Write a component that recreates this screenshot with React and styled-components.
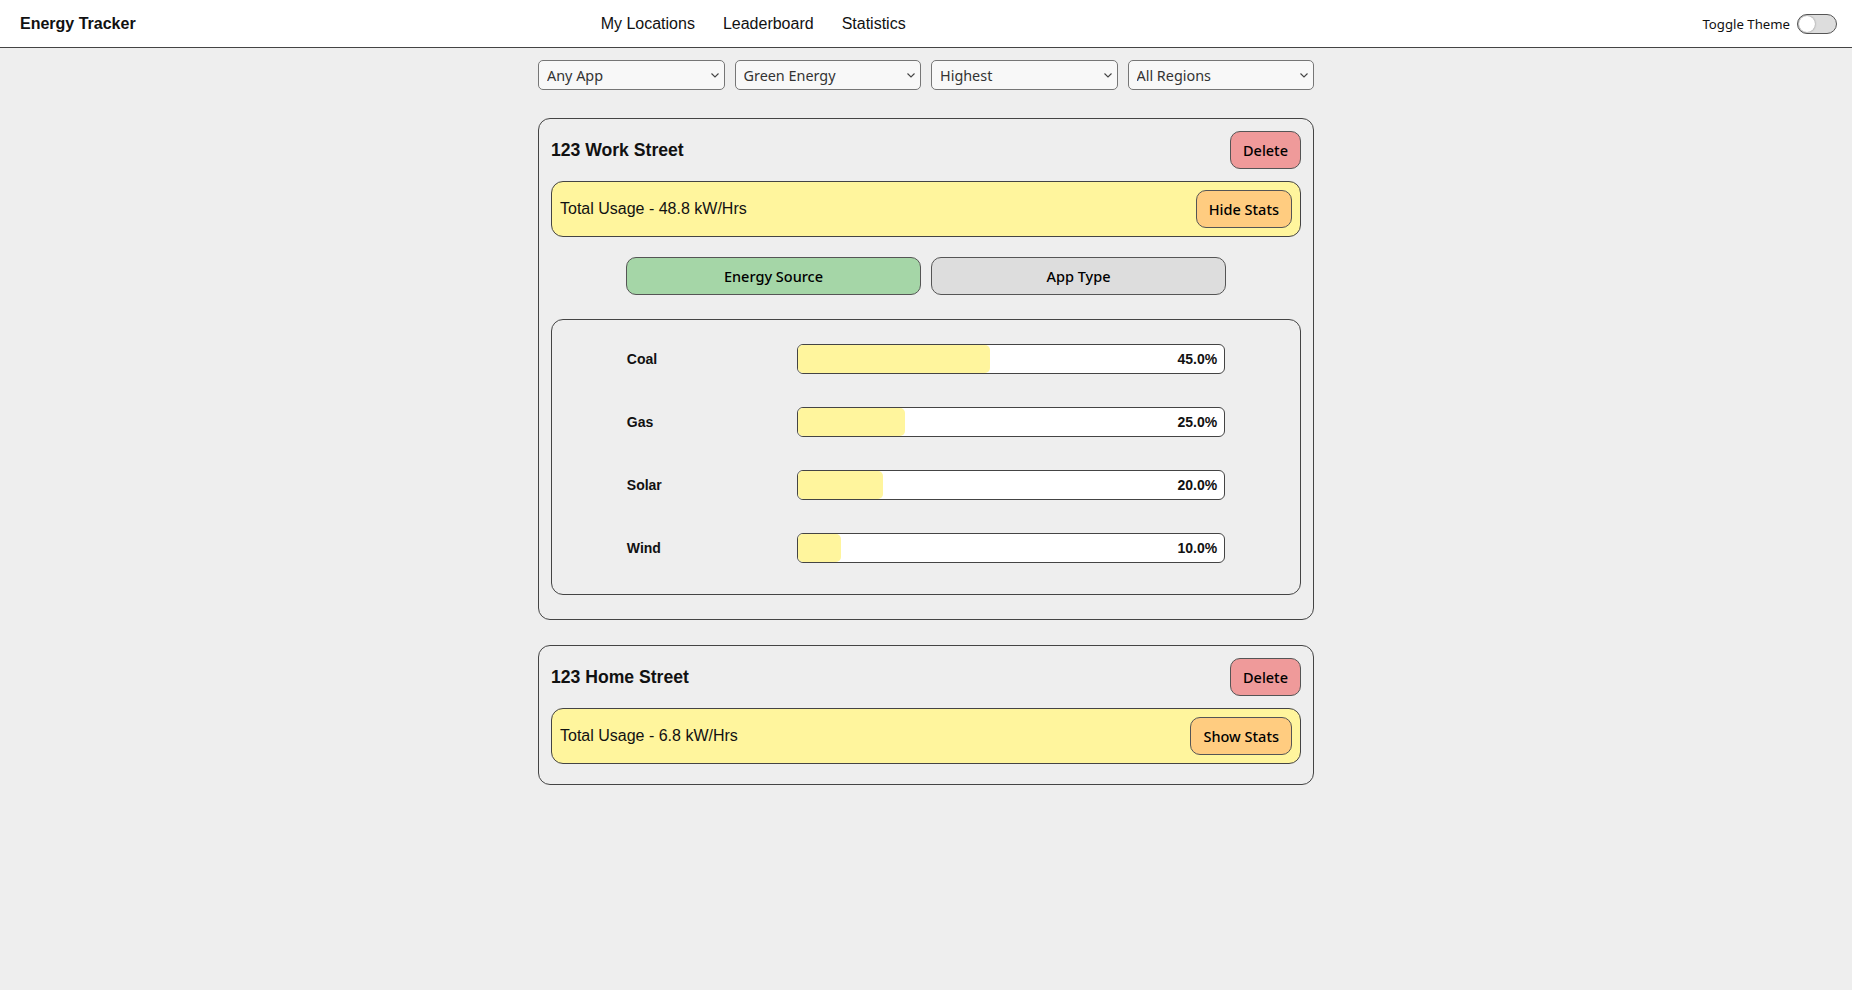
import React, { useState } from 'react'
import styled, { createGlobalStyle } from 'styled-components'

const GlobalStyle = createGlobalStyle`
      html, body {
            margin: 0;
            padding: 0;
            background: #eeeeee;
            font-family: "Liberation Sans", Arial, sans-serif;
            color: #111;
      }

      #root {
            min-height: 100vh;
      }
`

const locations = [
      {
            name: '123 Work Street',
            usage: 48.8,
            open: true,
            sources: [
                  { label: 'Coal', value: 45 },
                  { label: 'Gas', value: 25 },
                  { label: 'Solar', value: 20 },
                  { label: 'Wind', value: 10 },
            ],
      },
      {
            name: '123 Home Street',
            usage: 6.8,
            open: false,
            sources: [],
      },
]

const filters = ['Any App', 'Green Energy', 'Highest', 'All Regions']

const App = () => {
      return (
            <>
                  <GlobalStyle />
                  <Header>
                        <Brand>Energy Tracker</Brand>
                        <Nav>
                              <NavLink>My Locations</NavLink>
                              <NavLink>Leaderboard</NavLink>
                              <NavLink>Statistics</NavLink>
                        </Nav>
                        <ThemeToggle>
                              <span>Toggle Theme</span>
                              <Switch><Knob /></Switch>
                        </ThemeToggle>
                  </Header>
                  <Main>
                        <Filters>
                              {
                                    filters.map(f => (
                                          <SelectWrap key={f}>
                                                <Select defaultValue={f}>
                                                      <option value={f}>{f}</option>
                                                </Select>
                                                <Chevron viewBox='0 0 8 5'>
                                                      <path d='M0.5 0.5 L4 4 L7.5 0.5' fill='none' stroke='#444' strokeWidth='1.1' />
                                                </Chevron>
                                          </SelectWrap>
                                    ))
                              }
                        </Filters>
                        {
                              locations.map(loc => <LocationCard key={loc.name} {...loc} />)
                        }
                  </Main>
            </>
      )
}

export default App

const LocationCard = ({ name, usage, open, sources }) => {
      const [tab, setTab] = useState('source')

      return (
            <Card>
                  <CardHead>
                        <h3>{name}</h3>
                        <Button color='#ef9a9a'>Delete</Button>
                  </CardHead>
                  <Usage>
                        <span>Total Usage - {usage} kW/Hrs</span>
                        <Button color='#ffcc80'>{open ? 'Hide Stats' : 'Show Stats'}</Button>
                  </Usage>
                  {
                        open && (
                              <>
                                    <Tabs>
                                          <Tab $active={tab === 'source'} onClick={() => setTab('source')}>Energy Source</Tab>
                                          <Tab $active={tab === 'app'} onClick={() => setTab('app')}>App Type</Tab>
                                    </Tabs>
                                    <Chart>
                                          {
                                                sources.map(s => (
                                                      <Row key={s.label}>
                                                            <Label>{s.label}</Label>
                                                            <Bar>
                                                                  <Fill style={{ width: `${s.value}%` }} />
                                                                  <Percent>{s.value.toFixed(1)}%</Percent>
                                                            </Bar>
                                                      </Row>
                                                ))
                                          }
                                    </Chart>
                              </>
                        )
                  }
            </Card>
      )
}

const Header = styled.header`
      display: flex;
      align-items: center;
      height: 47px;
      padding: 0 15px 0 20px;
      background: #fff;
      border-bottom: 1px solid #444;
`

const Brand = styled.div`
      font-size: 16px;
      font-weight: bold;
      color: #111;
`

const Nav = styled.nav`
      display: flex;
      gap: 28px;
      margin-left: 465px;
`

const NavLink = styled.a`
      font-size: 16px;
      color: #111;
      cursor: pointer;
`

const ThemeToggle = styled.label`
      display: flex;
      align-items: center;
      gap: 7px;
      margin-left: auto;
      font-family: "Noto Sans", sans-serif;
      font-size: 13.2px;
      color: #111;
`

const Switch = styled.div`
      position: relative;
      width: 38px;
      height: 18px;
      border: 1px solid #555;
      border-radius: 10px;
      background: #dddddd;
`

const Knob = styled.div`
      position: absolute;
      top: 1px;
      left: 1px;
      width: 16px;
      height: 16px;
      border-radius: 50%;
      background: #fff;
      box-shadow: 0 0 2px rgba(0, 0, 0, 0.45);
`

const Main = styled.main`
      width: 776px;
      margin: 0 auto;
      padding: 12px 0 40px;
`

const Filters = styled.div`
      display: grid;
      grid-template-columns: repeat(4, 1fr);
      gap: 10px;
      margin-bottom: 28px;
`

const SelectWrap = styled.div`
      position: relative;
`

const Select = styled.select`
      appearance: none;
      width: 100%;
      height: 30px;
      padding: 0 20px 0 8px;
      font-family: "Noto Sans", sans-serif;
      font-size: 14.4px;
      color: #333;
      background: #f8f8f8;
      border: 1px solid #767676;
      border-radius: 5px;
`

const Chevron = styled.svg`
      position: absolute;
      right: 6px;
      top: 13px;
      width: 8px;
      height: 5px;
      pointer-events: none;
`

const Card = styled.section`
      display: flex;
      flex-direction: column;
      gap: 12px;
      padding: 12px;
      margin-bottom: 25px;
      border: 1px solid #444;
      border-radius: 12px;
`

const CardHead = styled.div`
      display: flex;
      align-items: center;
      justify-content: space-between;

      h3 {
            margin: 0;
            font-size: 17.6px;
            font-weight: bold;
      }
`

const Button = styled.button`
      padding: 8px 12px;
      font-family: "Noto Sans", sans-serif;
      font-size: 14.5px;
      font-weight: 500;
      line-height: 20px;
      color: #000;
      background: ${({ color }) => color};
      border: 1px solid #555;
      border-radius: 10px;
      cursor: pointer;
`

const Usage = styled.div`
      display: flex;
      align-items: center;
      justify-content: space-between;
      padding: 8px;
      margin-bottom: 8px;
      font-size: 16px;
      background: #fff59d;
      border: 1px solid #444;
      border-radius: 12px;
`

const Tabs = styled.div`
      display: flex;
      gap: 10px;
      width: 80%;
      margin: 0 auto 12px;
`

const Tab = styled.button`
      flex: 1;
      height: 38px;
      font-family: "Noto Sans", sans-serif;
      font-size: 14.5px;
      font-weight: 500;
      color: #000;
      background: ${({ $active }) => $active ? '#a5d6a7' : '#dddddd'};
      border: 1px solid #555;
      border-radius: 10px;
      cursor: pointer;
`

const Chart = styled.div`
      padding: 24px 0 0;
      margin-bottom: 12px;
      border: 1px solid #444;
      border-radius: 12px;
`

const Row = styled.div`
      display: flex;
      align-items: center;
      width: 80%;
      margin: 0 auto 33px;

      &:last-child {
            margin-bottom: 31px;
      }
`

const Label = styled.div`
      flex: 2;
      font-size: 14px;
      font-weight: bold;
`

const Bar = styled.div`
      position: relative;
      flex: 5;
      height: 28px;
      background: #fff;
      border: 1px solid #444;
      border-radius: 6px;
      overflow: hidden;
`

const Fill = styled.div`
      height: 100%;
      background: #fff59d;
      border-radius: 0 5px 5px 0;
`

const Percent = styled.span`
      position: absolute;
      right: 7px;
      top: 50%;
      transform: translateY(-50%);
      font-size: 14px;
      font-weight: bold;
`
